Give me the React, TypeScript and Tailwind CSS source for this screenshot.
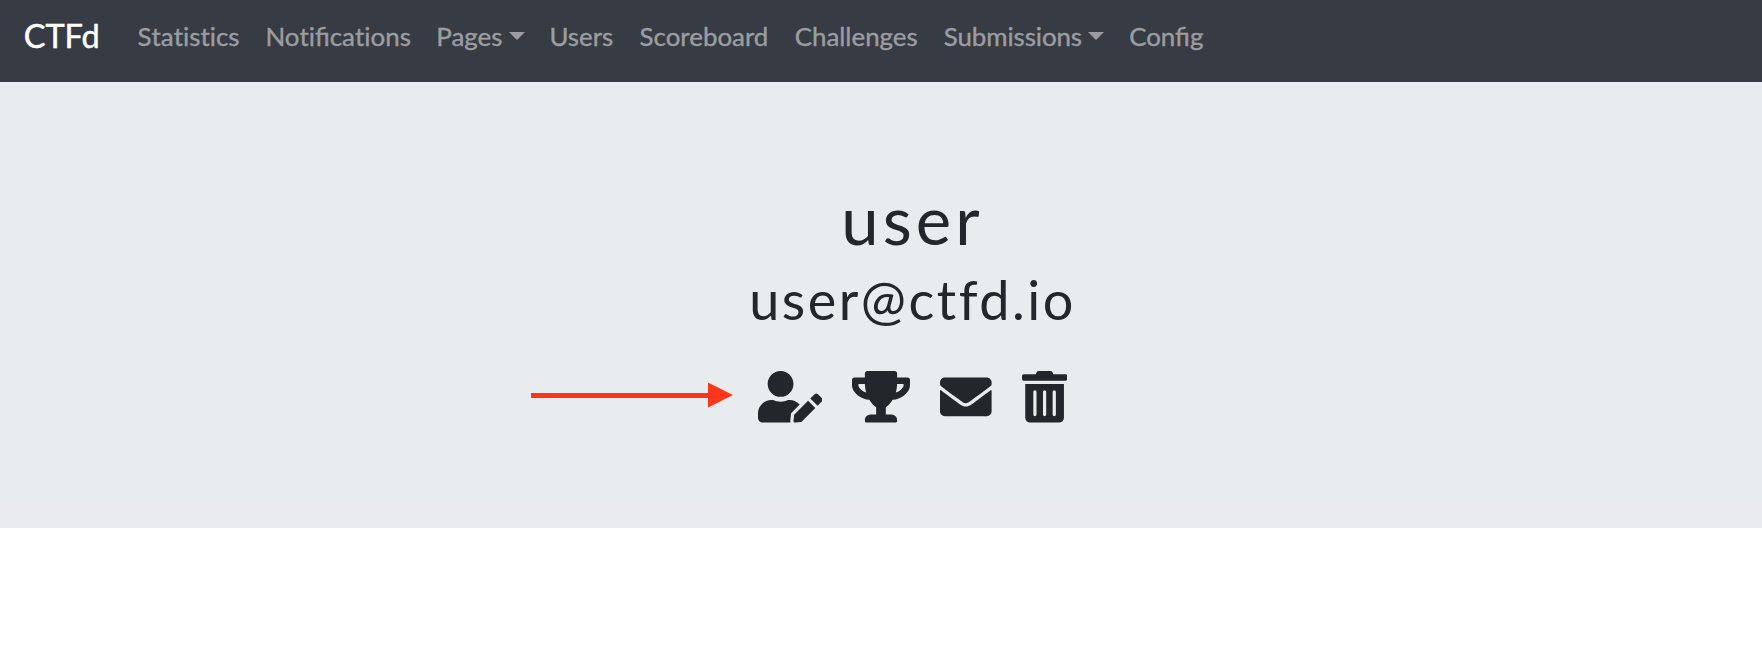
import { Fragment } from "react";
import { FaEnvelope, FaTrashAlt, FaTrophy, FaUserEdit } from "react-icons/fa";

const links = [
  { label: "Statistics", width: "w-[127.9px]" },
  { label: "Notifications", width: "w-[170.9px]" },
  { label: "Pages", width: "w-[113.2px]", menu: true },
  { label: "Users", width: "w-[90.1px]" },
  { label: "Scoreboard", width: "w-[155.1px]" },
  { label: "Challenges", width: "w-[149.2px]" },
  { label: "Submissions", width: "w-[185.3px] tracking-[-0.1px]", menu: true },
  { label: "Config", width: "w-[100px]" },
];

// Lato joins "ti" into one glyph; each "t" is set apart so that only "fi" is joined.
function Label({ text }: { text: string }) {
  return (
    <span>
      {text.split("t").map((part, i) => (
        <Fragment key={i}>
          {i > 0 && <span className="[font-variant-ligatures:none]">t</span>}
          {part}
        </Fragment>
      ))}
    </span>
  );
}

function Navbar() {
  return (
    <nav className="flex h-[82px] items-start bg-[#373b43] pt-4 pl-[23.7px]">
      <a href="#" className="w-[113.8px] text-[32.5px] leading-10 text-white [-webkit-text-stroke:0.5px_white]">
        CTFd
      </a>
      <ul className="flex text-[25.9px] leading-10 text-[#9b9da1] [-webkit-text-stroke:0.4px_#9b9da1]">
        {links.map((link) => (
          <li key={link.label} className={link.width}>
            <a href="#" className="flex items-center whitespace-nowrap">
              <Label text={link.label} />
              {link.menu && (
                <span className="ml-[6.5px] border-x-[8px] border-t-[8px] border-x-transparent border-t-[#9b9da1]" />
              )}
            </a>
          </li>
        ))}
      </ul>
    </nav>
  );
}

function Arrow() {
  return (
    <svg className="absolute top-[300px] left-[531px] h-[26px] w-[202px]" viewBox="0 0 202 26" fill="#ff3617">
      <path d="M0 11h177v-10.500l25 12.500l-25 12.500V16H0z" />
    </svg>
  );
}

export default function App() {
  return (
    <div className="min-h-[666px] bg-white font-[Lato,sans-serif]">
      <Navbar />
      <header className="relative flex h-[446px] flex-col items-center border-b-[25px] border-[#eaebef] bg-[#e8ecef] pt-[97px] pl-[63px] text-[#23272b]">
        <h1 className="text-[67px] leading-20 tracking-[4.100px]">user</h1>
        <h2 className="mt-[9px] text-[54px] leading-16 tracking-[2.500px]">user@ctfd.io</h2>
        <div className="mt-[39px] flex gap-[30px]">
          <a href="#" aria-label="Edit user">
            <FaUserEdit className="h-[51.600px] w-[64.500px]" />
          </a>
          <a href="#" aria-label="Awards">
            <FaTrophy className="h-[51.600px] w-[58px]" />
          </a>
          <a href="#" aria-label="Email user">
            <FaEnvelope className="h-[51.600px] w-[51.600px]" />
          </a>
          <a href="#" aria-label="Delete user">
            <FaTrashAlt className="h-[51.600px] w-[45.200px]" />
          </a>
        </div>
        <Arrow />
      </header>
    </div>
  );
}
